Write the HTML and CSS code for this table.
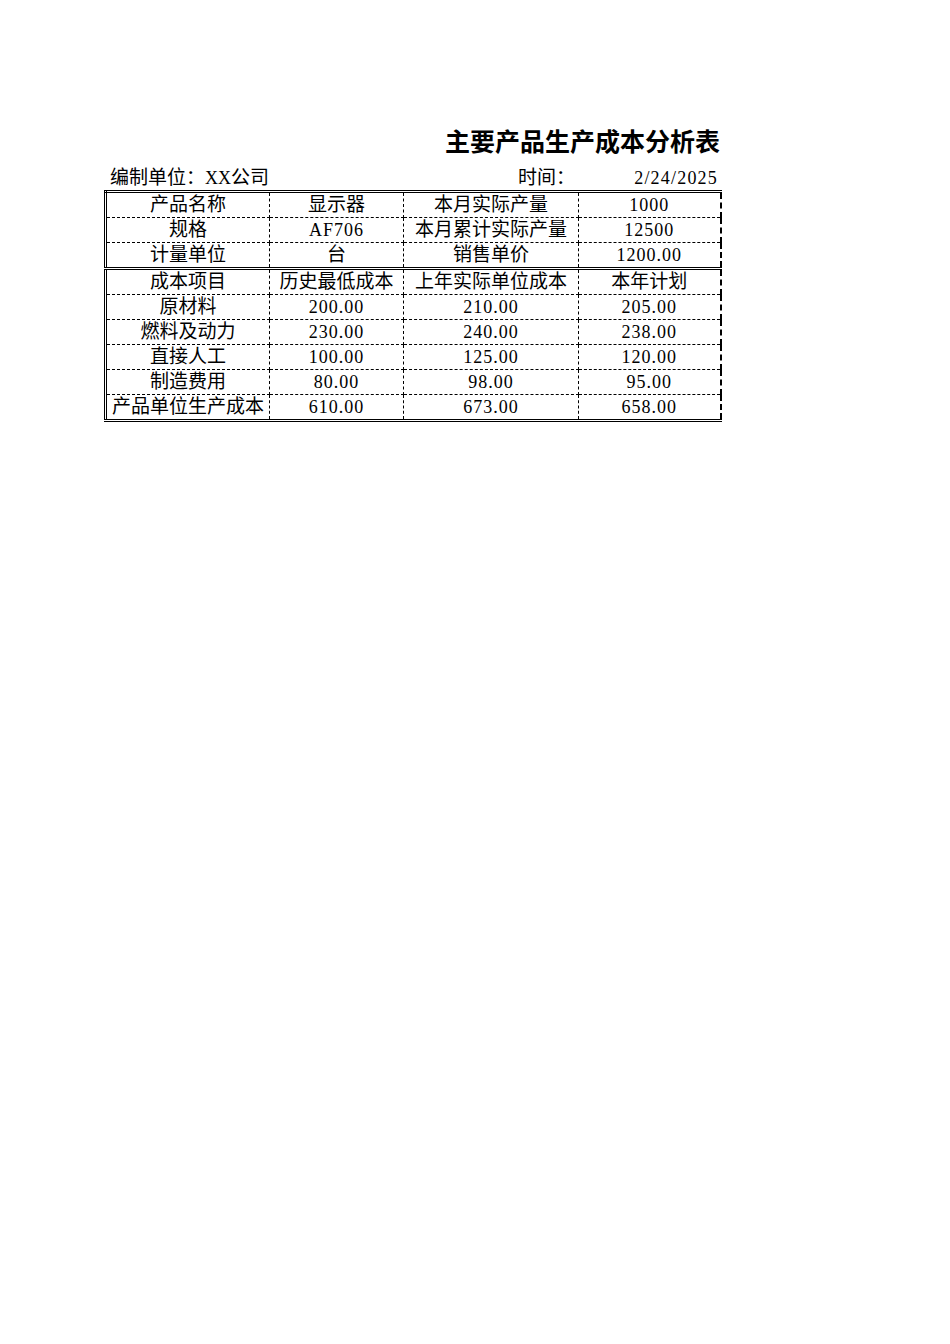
FILE: index.html
```html
<!DOCTYPE html>
<html lang="zh">
<head>
<meta charset="utf-8">
<title>主要产品生产成本分析表</title>
<link rel="stylesheet" href="styles.css">
</head>
<body>
<div class="sheet">
  <div class="title">主要产品生产成本分析表</div>
  <div class="info">
    <div class="info-left">编制单位：<span class="latin tight">XX</span>公司</div>
    <div class="info-time">时间：</div>
    <div class="info-date latin">2/24/2025</div>
  </div>
  <table class="grid">
    <colgroup>
      <col class="c1"><col class="c2"><col class="c3"><col class="c4">
    </colgroup>
    <tbody>
      <tr><td>产品名称</td><td>显示器</td><td>本月实际产量</td><td class="num">1000</td></tr>
      <tr><td>规格</td><td class="num">AF706</td><td>本月累计实际产量</td><td class="num">12500</td></tr>
      <tr class="sep"><td>计量单位</td><td>台</td><td>销售单价</td><td class="num">1200.00</td></tr>
      <tr><td>成本项目</td><td>历史最低成本</td><td>上年实际单位成本</td><td>本年计划</td></tr>
      <tr><td>原材料</td><td class="num">200.00</td><td class="num">210.00</td><td class="num">205.00</td></tr>
      <tr><td>燃料及动力</td><td class="num">230.00</td><td class="num">240.00</td><td class="num">238.00</td></tr>
      <tr><td>直接人工</td><td class="num">100.00</td><td class="num">125.00</td><td class="num">120.00</td></tr>
      <tr><td>制造费用</td><td class="num">80.00</td><td class="num">98.00</td><td class="num">95.00</td></tr>
      <tr class="last"><td>产品单位生产成本</td><td class="num">610.00</td><td class="num">673.00</td><td class="num">658.00</td></tr>
    </tbody>
  </table>
</div>
</body>
</html>
```

FILE: styles.css
```css
html, body {
  margin: 0;
  padding: 0;
  background: #ffffff;
}

body {
  font-family: "Liberation Serif", "Noto Sans CJK SC", serif;
  color: #000;
}

.sheet {
  margin-left: 104px;
  padding-top: 125px;
  width: 616px;
}

.title {
  height: 30px;
  line-height: 30px;
  font-size: 25px;
  font-weight: bold;
  text-align: right;
  font-family: "Noto Sans CJK SC", sans-serif;
}

.info {
  margin-top: 11px;
  display: grid;
  grid-template-columns: 298px 175px 143px;
  height: 24px;
  line-height: 24px;
  font-size: 19px;
}

.latin {
  font-family: "Liberation Serif", serif;
  font-size: 18px;
  letter-spacing: 1.2px;
}

.latin.tight {
  letter-spacing: 0;
  font-size: 18px;
}

.info-left {
  padding-left: 6px;
  white-space: nowrap;
}

.info-time {
  text-align: right;
  padding-right: 2px;
}

.info-date {
  text-align: right;
  padding-right: 2px;
}

.grid {
  border-collapse: collapse;
  table-layout: fixed;
  width: 615px;
  border-top: 3px double #000;
  border-left: 3px double #000;
  border-bottom: 3px double #000;
  border-right: 2px dashed #000;
}

.c1 { width: 164px; }
.c2 { width: 134px; }
.c3 { width: 175px; }
.c4 { width: 142px; }

.grid td {
  height: 24px;
  padding: 0;
  text-align: center;
  vertical-align: middle;
  font-size: 19px;
  line-height: 22px;
  white-space: nowrap;
  border-right: 1px dashed #000;
  border-bottom: 1px dashed #000;
}

.grid td:last-child {
  border-right: 2px dashed #000;
}

.grid td.num {
  font-family: "Liberation Serif", serif;
  font-size: 18px;
  letter-spacing: 1px;
}

.grid tr.sep td {
  border-bottom: 3px double #000;
}

.grid tr.last td {
  border-bottom: 3px double #000;
}
```
